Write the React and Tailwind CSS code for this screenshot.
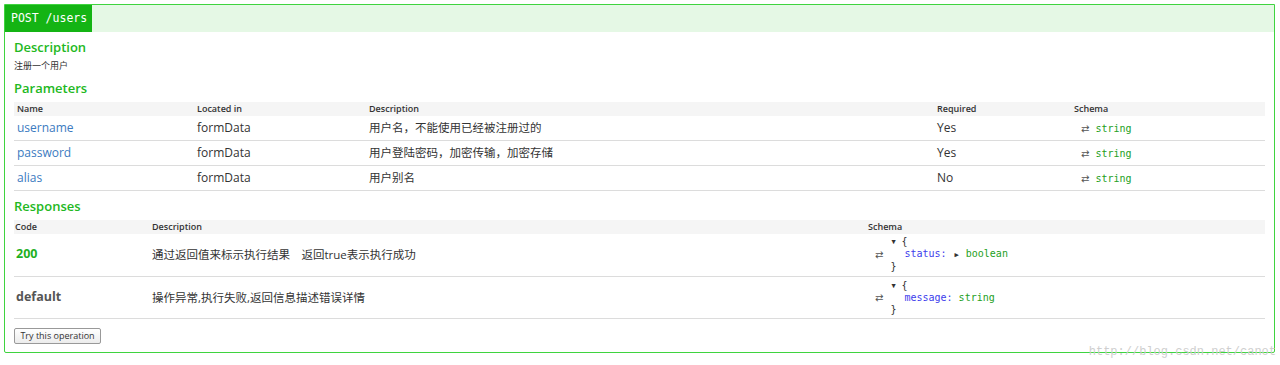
import React from "react";

const sans = { fontFamily: '"Open Sans", "Noto Sans CJK SC", sans-serif' };

const params = [
    { name: "username", loc: "formData", desc: "用户名，不能使用已经被注册过的", req: "Yes" },
    { name: "password", loc: "formData", desc: "用户登陆密码，加密传输，加密存储", req: "Yes" },
    { name: "alias", loc: "formData", desc: "用户别名", req: "No" },
];

function Swap() {
    return <span className="text-[#555] font-['DejaVu_Sans'] text-[10px]">⇄</span>;
}

function Model({ field, type, expandable }) {
    return (
        <div className="font-['DejaVu_Sans_Mono',monospace] text-[10px] leading-[12px]">
            <div className="flex items-center">
                <span className="text-[#333] text-[7px] w-[12px] pl-[2px]">▼</span>
                <span className="text-[#333]">{"{"}</span>
            </div>
            <div className="pl-[15px]">
                <span className="text-[#3d3dec]">{field}:</span>
                {expandable ? <span className="text-[#333] text-[7px] ml-[8px] mr-[7px]">▶</span> : <span> </span>}
                <span className="text-[#23a023]">{type}</span>
            </div>
            <div className="text-[#333] pl-[1px]">{"}"}</div>
        </div>
    );
}

export default function App() {
    return (
        <div className="bg-white w-[1280px] h-[365px] pt-[4px] pl-[4px]" style={sans}>
            <div className="relative w-[1271px] h-[349px] border border-[#3fd43f] rounded-b-[2px]">
                <div className="flex h-[27px] bg-[#e5f8e5]">
                    <div className="bg-[#14b414] text-white font-['DejaVu_Sans_Mono',monospace] text-[11.5px] whitespace-nowrap flex items-center px-[6px] w-[87px]">
                        POST /users
                    </div>
                </div>

                <div className="px-[9px] pt-[6px]">
                    <h4 className="text-[#22b822] text-[13px] font-semibold leading-[18px]">Description</h4>
                    <p className="text-[#333] text-[9px] leading-[14px] mt-[3px]">注册一个用户</p>

                    <h4 className="text-[#22b822] text-[13px] font-semibold leading-[18px] mt-[6px]">Parameters</h4>
                    <table className="w-[1251px] mt-[5px] border-collapse table-fixed">
                        <thead>
                            <tr className="bg-[#f5f5f5] h-[14px] text-left text-[9px] font-semibold text-[#333]">
                                <th className="w-[183px] pl-[3px] font-semibold">Name</th>
                                <th className="w-[172px] font-semibold">Located in</th>
                                <th className="w-[568px] font-semibold">Description</th>
                                <th className="w-[137px] font-semibold">Required</th>
                                <th className="font-semibold">Schema</th>
                            </tr>
                        </thead>
                        <tbody>
                            {params.map((p, i) => (
                                <tr key={p.name} className={`${i === 0 ? "h-[24px]" : "h-[25px]"} border-b border-[#dcdcdc] text-[12px] text-[#333]`}>
                                    <td className="pl-[3px] text-[#3b7bbf]">{p.name}</td>
                                    <td>{p.loc}</td>
                                    <td className="text-[11.5px]">{p.desc}</td>
                                    <td>{p.req}</td>
                                    <td className="pl-[7px]">
                                        <Swap />
                                        <span className="ml-[6px] text-[#23a023] font-['DejaVu_Sans_Mono',monospace] text-[10px]">string</span>
                                    </td>
                                </tr>
                            ))}
                        </tbody>
                    </table>

                    <h4 className="text-[#22b822] text-[13px] font-semibold leading-[18px] mt-[6px]">Responses</h4>
                    <table className="w-[1251px] mt-[5px] border-collapse table-fixed">
                        <thead>
                            <tr className="bg-[#f5f5f5] h-[14px] text-left text-[9px] text-[#333]">
                                <th className="w-[138px] pl-[1px] font-semibold">Code</th>
                                <th className="w-[716px] font-semibold">Description</th>
                                <th className="font-semibold">Schema</th>
                            </tr>
                        </thead>
                        <tbody>
                            <tr className="h-[43px] border-b border-[#dcdcdc]">
                                <td className="pl-[2px] text-[12.5px] font-bold text-[#1fb01f]">200</td>
                                <td className="text-[11.5px] text-[#333]">通过返回值来标示执行结果　返回true表示执行成功</td>
                                <td>
                                    <div className="flex items-center pl-[7px]">
                                        <Swap />
                                        <div className="ml-[6px]">
                                            <Model field="status" type="boolean" expandable />
                                        </div>
                                    </div>
                                </td>
                            </tr>
                            <tr className="h-[42px] border-b border-[#dcdcdc]">
                                <td className="pl-[2px] text-[12.5px] font-bold text-[#555]">default</td>
                                <td className="text-[11.5px] text-[#333]">操作异常,执行失败,返回信息描述错误详情</td>
                                <td>
                                    <div className="flex items-center pl-[7px]">
                                        <Swap />
                                        <div className="ml-[6px]">
                                            <Model field="message" type="string" />
                                        </div>
                                    </div>
                                </td>
                            </tr>
                        </tbody>
                    </table>

                    <button className="mt-[9px] h-[16px] w-[87px] text-[9px] leading-[14px] text-[#333] border border-[#999] rounded-[2px] bg-gradient-to-b from-white to-[#ececec]">
                        Try this operation
                    </button>
                </div>

                <div className="absolute right-[-2px] bottom-[-9px] text-[12px] text-[#cfcfcf] font-['Liberation_Mono',monospace]">
                    http://blog.csdn.net/canot
                </div>
            </div>
        </div>
    );
}
